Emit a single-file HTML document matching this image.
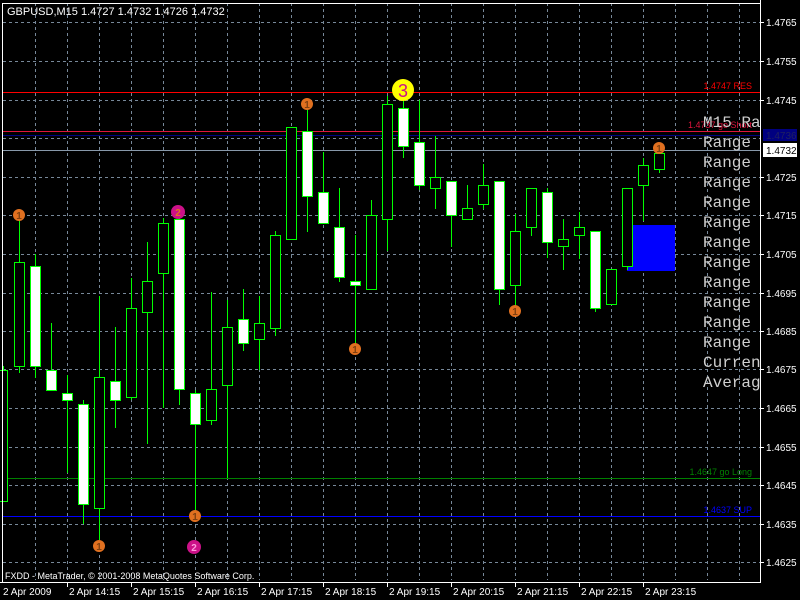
<!DOCTYPE html>
<html><head><meta charset="utf-8"><style>
html,body{margin:0;padding:0;background:#000;width:800px;height:600px;overflow:hidden}
svg{display:block}
text{font-family:"Liberation Sans",sans-serif}
text.mono{font-family:"Liberation Mono",monospace}
</style></head><body>
<svg width="800" height="600" xmlns="http://www.w3.org/2000/svg">
<rect width="800" height="600" fill="#000"/>
<g stroke="#778899" stroke-width="1" stroke-dasharray="3,3">
<line x1="3" y1="22.5" x2="760" y2="22.5"/><line x1="3" y1="61.5" x2="760" y2="61.5"/><line x1="3" y1="100.5" x2="760" y2="100.5"/><line x1="3" y1="138.5" x2="760" y2="138.5"/><line x1="3" y1="177.5" x2="760" y2="177.5"/><line x1="3" y1="215.5" x2="760" y2="215.5"/><line x1="3" y1="254.5" x2="760" y2="254.5"/><line x1="3" y1="293.5" x2="760" y2="293.5"/><line x1="3" y1="331.5" x2="760" y2="331.5"/><line x1="3" y1="369.5" x2="760" y2="369.5"/><line x1="3" y1="408.5" x2="760" y2="408.5"/><line x1="3" y1="447.5" x2="760" y2="447.5"/><line x1="3" y1="485.5" x2="760" y2="485.5"/><line x1="3" y1="524.5" x2="760" y2="524.5"/><line x1="3" y1="562.5" x2="760" y2="562.5"/>
<line x1="35.5" y1="3" x2="35.5" y2="580"/><line x1="67.5" y1="3" x2="67.5" y2="580"/><line x1="99.5" y1="3" x2="99.5" y2="580"/><line x1="131.5" y1="3" x2="131.5" y2="580"/><line x1="163.5" y1="3" x2="163.5" y2="580"/><line x1="195.5" y1="3" x2="195.5" y2="580"/><line x1="227.5" y1="3" x2="227.5" y2="580"/><line x1="259.5" y1="3" x2="259.5" y2="580"/><line x1="291.5" y1="3" x2="291.5" y2="580"/><line x1="323.5" y1="3" x2="323.5" y2="580"/><line x1="355.5" y1="3" x2="355.5" y2="580"/><line x1="387.5" y1="3" x2="387.5" y2="580"/><line x1="419.5" y1="3" x2="419.5" y2="580"/><line x1="451.5" y1="3" x2="451.5" y2="580"/><line x1="483.5" y1="3" x2="483.5" y2="580"/><line x1="515.5" y1="3" x2="515.5" y2="580"/><line x1="547.5" y1="3" x2="547.5" y2="580"/><line x1="579.5" y1="3" x2="579.5" y2="580"/><line x1="611.5" y1="3" x2="611.5" y2="580"/><line x1="643.5" y1="3" x2="643.5" y2="580"/><line x1="675.5" y1="3" x2="675.5" y2="580"/><line x1="707.5" y1="3" x2="707.5" y2="580"/><line x1="739.5" y1="3" x2="739.5" y2="580"/>
</g>
<rect x="627" y="225" width="48" height="46" fill="#0000ff"/>
<line x1="3" y1="92.5" x2="760" y2="92.5" stroke="#ff0000"/>
<line x1="3" y1="131.5" x2="760" y2="131.5" stroke="#dc143c"/>
<line x1="3" y1="135.5" x2="760" y2="135.5" stroke="#000080"/>
<line x1="3" y1="150.5" x2="760" y2="150.5" stroke="#8899aa"/>
<line x1="3" y1="478.5" x2="760" y2="478.5" stroke="#008000"/>
<line x1="3" y1="516.5" x2="760" y2="516.5" stroke="#0000ff"/>
<g stroke="#00ff00" stroke-width="1">
<line x1="3.5" y1="366" x2="3.5" y2="501"/><rect x="-2.5" y="370.5" width="10" height="131" fill="#000"/>
<line x1="19.5" y1="215" x2="19.5" y2="373"/><rect x="14.5" y="262.5" width="10" height="104" fill="#000"/>
<line x1="35.5" y1="254" x2="35.5" y2="378"/><rect x="30.5" y="266.5" width="10" height="100" fill="#fff"/>
<line x1="51.5" y1="323" x2="51.5" y2="390"/><rect x="46.5" y="370.5" width="10" height="20" fill="#fff"/>
<line x1="67.5" y1="375" x2="67.5" y2="473"/><rect x="62.5" y="393.5" width="10" height="7" fill="#fff"/>
<line x1="83.5" y1="400" x2="83.5" y2="524"/><rect x="78.5" y="404.5" width="10" height="100" fill="#fff"/>
<line x1="99.5" y1="296" x2="99.5" y2="540"/><rect x="94.5" y="377.5" width="10" height="131" fill="#000"/>
<line x1="115.5" y1="327" x2="115.5" y2="428"/><rect x="110.5" y="381.5" width="10" height="19" fill="#fff"/>
<line x1="131.5" y1="278" x2="131.5" y2="400"/><rect x="126.5" y="308.5" width="10" height="89" fill="#000"/>
<line x1="147.5" y1="242" x2="147.5" y2="444"/><rect x="142.5" y="281.5" width="10" height="31" fill="#000"/>
<line x1="163.5" y1="218" x2="163.5" y2="408"/><rect x="158.5" y="223.5" width="10" height="50" fill="#000"/>
<line x1="179.5" y1="213" x2="179.5" y2="405"/><rect x="174.5" y="219.5" width="10" height="170" fill="#fff"/>
<line x1="195.5" y1="390" x2="195.5" y2="516"/><rect x="190.5" y="393.5" width="10" height="31" fill="#fff"/>
<line x1="211.5" y1="292" x2="211.5" y2="425"/><rect x="206.5" y="389.5" width="10" height="31" fill="#000"/>
<line x1="227.5" y1="300" x2="227.5" y2="478"/><rect x="222.5" y="327.5" width="10" height="58" fill="#000"/>
<line x1="243.5" y1="289" x2="243.5" y2="351"/><rect x="238.5" y="319.5" width="10" height="24" fill="#fff"/>
<line x1="259.5" y1="296" x2="259.5" y2="370"/><rect x="254.5" y="323.5" width="10" height="16" fill="#000"/>
<line x1="275.5" y1="231" x2="275.5" y2="336"/><rect x="270.5" y="235.5" width="10" height="93" fill="#000"/>
<line x1="291.5" y1="127" x2="291.5" y2="239"/><rect x="286.5" y="127.5" width="10" height="112" fill="#000"/>
<line x1="307.5" y1="101" x2="307.5" y2="232"/><rect x="302.5" y="131.5" width="10" height="65" fill="#fff"/>
<line x1="323.5" y1="152" x2="323.5" y2="223"/><rect x="318.5" y="192.5" width="10" height="31" fill="#fff"/>
<line x1="339.5" y1="188" x2="339.5" y2="282"/><rect x="334.5" y="227.5" width="10" height="50" fill="#fff"/>
<line x1="355.5" y1="235" x2="355.5" y2="349"/><rect x="350.5" y="281.5" width="10" height="4" fill="#fff"/>
<line x1="371.5" y1="200" x2="371.5" y2="289"/><rect x="366.5" y="215.5" width="10" height="74" fill="#000"/>
<line x1="387.5" y1="96" x2="387.5" y2="251"/><rect x="382.5" y="104.5" width="10" height="115" fill="#000"/>
<line x1="403.5" y1="101" x2="403.5" y2="158"/><rect x="398.5" y="108.5" width="10" height="38" fill="#fff"/>
<line x1="419.5" y1="100" x2="419.5" y2="190"/><rect x="414.5" y="142.5" width="10" height="43" fill="#fff"/>
<line x1="435.5" y1="136" x2="435.5" y2="209"/><rect x="430.5" y="177.5" width="10" height="11" fill="#000"/>
<line x1="451.5" y1="181" x2="451.5" y2="247"/><rect x="446.5" y="181.5" width="10" height="34" fill="#fff"/>
<line x1="467.5" y1="185" x2="467.5" y2="219"/><rect x="462.5" y="208.5" width="10" height="11" fill="#000"/>
<line x1="483.5" y1="164" x2="483.5" y2="209"/><rect x="478.5" y="185.5" width="10" height="19" fill="#000"/>
<line x1="499.5" y1="181" x2="499.5" y2="305"/><rect x="494.5" y="181.5" width="10" height="108" fill="#fff"/>
<line x1="515.5" y1="214" x2="515.5" y2="308"/><rect x="510.5" y="231.5" width="10" height="54" fill="#000"/>
<line x1="531.5" y1="188" x2="531.5" y2="236"/><rect x="526.5" y="188.5" width="10" height="39" fill="#000"/>
<line x1="547.5" y1="188" x2="547.5" y2="258"/><rect x="542.5" y="192.5" width="10" height="50" fill="#fff"/>
<line x1="563.5" y1="219" x2="563.5" y2="270"/><rect x="558.5" y="239.5" width="10" height="7" fill="#000"/>
<line x1="579.5" y1="212" x2="579.5" y2="259"/><rect x="574.5" y="227.5" width="10" height="8" fill="#000"/>
<line x1="595.5" y1="231" x2="595.5" y2="312"/><rect x="590.5" y="231.5" width="10" height="77" fill="#fff"/>
<line x1="611.5" y1="269" x2="611.5" y2="304"/><rect x="606.5" y="269.5" width="10" height="35" fill="#000"/>
<line x1="627.5" y1="188" x2="627.5" y2="270"/><rect x="622.5" y="188.5" width="10" height="78" fill="#000"/>
<line x1="643.5" y1="158" x2="643.5" y2="221"/><rect x="638.5" y="165.5" width="10" height="20" fill="#000"/>
<line x1="659.5" y1="150" x2="659.5" y2="173"/><rect x="654.5" y="153.5" width="10" height="16" fill="#000"/>
</g>
<g font-size="10" font-weight="bold" text-anchor="middle">
<circle cx="19" cy="215" r="6" fill="#e07020"/><text x="19" y="219" fill="#804010">1</text>
<circle cx="99" cy="546" r="6" fill="#e07020"/><text x="99" y="550" fill="#804010">1</text>
<circle cx="195" cy="516" r="6" fill="#e07020"/><text x="195" y="520" fill="#804010">1</text>
<circle cx="307" cy="104" r="6" fill="#e07020"/><text x="307" y="108" fill="#804010">1</text>
<circle cx="355" cy="349" r="6" fill="#e07020"/><text x="355" y="353" fill="#804010">1</text>
<circle cx="515" cy="311" r="6" fill="#e07020"/><text x="515" y="315" fill="#804010">1</text>
<circle cx="659" cy="148" r="6" fill="#e07020"/><text x="659" y="152" fill="#804010">1</text>
<circle cx="178" cy="212" r="7" fill="#cc1188"/><text x="178" y="216" fill="#e07020">2</text>
<circle cx="194" cy="547" r="7" fill="#cc1188"/><text x="194" y="551" fill="#ff99dd">2</text>
<circle cx="403" cy="90" r="11" fill="#ffff00"/><text x="403" y="97" font-size="18" font-weight="normal" fill="#cc1188">3</text>
</g>
<g font-size="9" text-anchor="end">
<text x="752" y="89" fill="#ff0000">1.4747 RES</text>
<text x="752" y="128" fill="#dc143c">1.4737 go Short</text>
<text x="752" y="475" fill="#008000">1.4647 go Long</text>
<text x="752" y="513" fill="#0000ff">1.4637 SUP</text>
</g>
<svg x="0" y="0" width="760" height="600">
<g font-size="16" fill="#d0d0d0">
<text class="mono" x="703" y="127">M15 Range</text>
<text class="mono" x="703" y="147">Range</text><text class="mono" x="703" y="167">Range</text><text class="mono" x="703" y="187">Range</text><text class="mono" x="703" y="207">Range</text><text class="mono" x="703" y="227">Range</text><text class="mono" x="703" y="247">Range</text><text class="mono" x="703" y="267">Range</text><text class="mono" x="703" y="287">Range</text><text class="mono" x="703" y="307">Range</text><text class="mono" x="703" y="327">Range</text><text class="mono" x="703" y="347">Range</text>
<text class="mono" x="703" y="367">Current</text><text class="mono" x="703" y="387">Average</text>
</g>
</svg>
<line x1="2.5" y1="3" x2="2.5" y2="582" stroke="#fff"/>
<line x1="760.5" y1="0" x2="760.5" y2="582" stroke="#fff"/>
<line x1="0" y1="582.5" x2="761" y2="582.5" stroke="#fff"/>
<line x1="2" y1="3.5" x2="761" y2="3.5" stroke="#fff"/>
<g font-size="10" fill="#fff">
<text x="766" y="26">1.4765</text><text x="766" y="65">1.4755</text><text x="766" y="104">1.4745</text><text x="766" y="181">1.4725</text><text x="766" y="219">1.4715</text><text x="766" y="258">1.4705</text><text x="766" y="297">1.4695</text><text x="766" y="335">1.4685</text><text x="766" y="373">1.4675</text><text x="766" y="412">1.4665</text><text x="766" y="451">1.4655</text><text x="766" y="489">1.4645</text><text x="766" y="528">1.4635</text><text x="766" y="566">1.4625</text>
</g>
<g stroke="#fff"><line x1="761" y1="22.5" x2="764" y2="22.5"/><line x1="761" y1="61.5" x2="764" y2="61.5"/><line x1="761" y1="100.5" x2="764" y2="100.5"/><line x1="761" y1="177.5" x2="764" y2="177.5"/><line x1="761" y1="215.5" x2="764" y2="215.5"/><line x1="761" y1="254.5" x2="764" y2="254.5"/><line x1="761" y1="293.5" x2="764" y2="293.5"/><line x1="761" y1="331.5" x2="764" y2="331.5"/><line x1="761" y1="369.5" x2="764" y2="369.5"/><line x1="761" y1="408.5" x2="764" y2="408.5"/><line x1="761" y1="447.5" x2="764" y2="447.5"/><line x1="761" y1="485.5" x2="764" y2="485.5"/><line x1="761" y1="524.5" x2="764" y2="524.5"/><line x1="761" y1="562.5" x2="764" y2="562.5"/></g>
<rect x="763" y="129" width="34" height="12" fill="#000080"/>
<text x="766" y="139" font-size="10" fill="#202060">1.4736</text>
<rect x="763" y="143" width="34" height="14" fill="#fff"/>
<text x="766" y="154" font-size="10" fill="#000">1.4732</text>
<text x="7" y="15" font-size="11" fill="#fff">GBPUSD,M15  1.4727 1.4732 1.4726 1.4732</text>
<text x="5" y="579" font-size="9" fill="#fff">FXDD - MetaTrader, © 2001-2008 MetaQuotes Software Corp.</text>
<g stroke="#fff"><line x1="67.5" y1="583" x2="67.5" y2="587"/><line x1="131.5" y1="583" x2="131.5" y2="587"/><line x1="195.5" y1="583" x2="195.5" y2="587"/><line x1="259.5" y1="583" x2="259.5" y2="587"/><line x1="323.5" y1="583" x2="323.5" y2="587"/><line x1="387.5" y1="583" x2="387.5" y2="587"/><line x1="451.5" y1="583" x2="451.5" y2="587"/><line x1="515.5" y1="583" x2="515.5" y2="587"/><line x1="579.5" y1="583" x2="579.5" y2="587"/><line x1="643.5" y1="583" x2="643.5" y2="587"/></g>
<g font-size="10" fill="#fff">
<text x="3" y="595">2 Apr 2009</text><text x="69" y="595">2 Apr 14:15</text><text x="133" y="595">2 Apr 15:15</text><text x="197" y="595">2 Apr 16:15</text><text x="261" y="595">2 Apr 17:15</text><text x="325" y="595">2 Apr 18:15</text><text x="389" y="595">2 Apr 19:15</text><text x="453" y="595">2 Apr 20:15</text><text x="517" y="595">2 Apr 21:15</text><text x="581" y="595">2 Apr 22:15</text><text x="645" y="595">2 Apr 23:15</text>
</g>
</svg>
</body></html>
